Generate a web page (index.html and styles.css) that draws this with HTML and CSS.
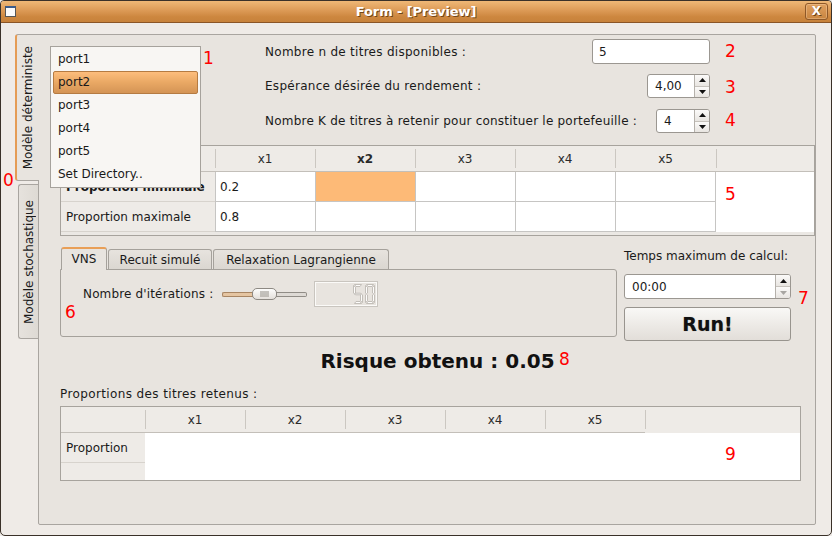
FILE: index.html
```html
<!DOCTYPE html>
<html lang="fr">
<head>
<meta charset="utf-8">
<title>Form - [Preview]</title>
<link rel="stylesheet" href="styles.css">
</head>
<body>
<div class="window">
  <header class="titlebar">
    <div class="tb-left"><span class="win-icon"></span></div>
    <span class="title">Form - [Preview]</span>
    <div class="tb-right"><span class="close">X</span></div>
  </header>
  <div class="body">
    <nav class="side-tabs">
      <div class="vtab active"><span>Modèle déterministe</span></div>
      <div class="vtab"><span>Modèle stochastique</span></div>
    </nav>
    <main class="pane">
      <section class="params">
        <div class="prow r1">
          <span class="plabel">Nombre n de titres disponibles :</span>
          <div class="field w-n">5</div>
        </div>
        <div class="prow r2">
          <span class="plabel">Espérance désirée du rendement :</span>
          <div class="spin w-esp">
            <span class="spin-val">4,00</span>
            <span class="spin-btns">
              <span><svg width="7" height="4" viewBox="0 0 7 4"><path d="M0 4L3.5 0L7 4Z" fill="#111"/></svg></span>
              <span><svg width="7" height="4" viewBox="0 0 7 4"><path d="M0 0L3.5 4L7 0Z" fill="#111"/></svg></span>
            </span>
          </div>
        </div>
        <div class="prow r3">
          <span class="plabel">Nombre K de titres à retenir pour constituer le portefeuille :</span>
          <div class="spin w-k">
            <span class="spin-val">4</span>
            <span class="spin-btns">
              <span><svg width="7" height="4" viewBox="0 0 7 4"><path d="M0 4L3.5 0L7 4Z" fill="#111"/></svg></span>
              <span><svg width="7" height="4" viewBox="0 0 7 4"><path d="M0 0L3.5 4L7 0Z" fill="#111"/></svg></span>
            </span>
          </div>
        </div>
      </section>

      <section class="grid1">
        <div class="hc corner"></div>
        <div class="hc sep">x1</div>
        <div class="hc sep bold">x2</div>
        <div class="hc sep">x3</div>
        <div class="hc sep">x4</div>
        <div class="hc sep">x5</div>
        <div class="hc sep fill"></div>

        <div class="rh bold">Proportion minimale</div>
        <div class="dc">0.2</div>
        <div class="dc sel"></div>
        <div class="dc"></div>
        <div class="dc"></div>
        <div class="dc last"></div>
        <div class="wfill"></div>

        <div class="rh">Proportion maximale</div>
        <div class="dc">0.8</div>
        <div class="dc"></div>
        <div class="dc"></div>
        <div class="dc"></div>
        <div class="dc last"></div>
        <div class="wfill"></div>

        <div class="bstrip"></div>
      </section>

      <section class="mid">
        <div class="algo">
          <div class="tabbar">
            <div class="tab active t-vns">VNS</div>
            <div class="tab t-recuit">Recuit simulé</div>
            <div class="tab t-relax">Relaxation Lagrangienne</div>
          </div>
          <div class="algo-pane">
            <div class="iter-row">
              <span class="iter-label">Nombre d'itérations :</span>
              <div class="slider">
                <span class="groove-fill"></span>
                <span class="handle"><span class="grip"></span></span>
                <span class="groove-rest"></span>
              </div>
              <div class="lcd">
                <svg width="23" height="20" viewBox="0 0 23 20">
                  <g fill="#fdfcfb" stroke="#bdb9b3" stroke-width="0.9" stroke-linejoin="round">
                    <g>
                      <polygon points="1.5,0.5 8.5,0.5 7,2.5 3,2.5"/>
                      <polygon points="0.5,1.5 2.5,3.2 2.5,9 1.5,9.8 0.5,9.2"/>
                      <polygon points="1.5,10 2.8,9.2 7.2,9.2 8.5,10 7.2,10.8 2.8,10.8"/>
                      <polygon points="9.5,10.8 9.5,18.5 7.5,16.8 7.5,11 8.5,10.2"/>
                      <polygon points="3,17.5 7,17.5 8.5,19.5 1.5,19.5"/>
                    </g>
                    <g transform="translate(12 0)">
                      <polygon points="1.5,0.5 8.5,0.5 7,2.5 3,2.5"/>
                      <polygon points="9.5,1.5 9.5,9.2 8.5,9.8 7.5,9 7.5,3.2"/>
                      <polygon points="0.5,1.5 2.5,3.2 2.5,9 1.5,9.8 0.5,9.2"/>
                      <polygon points="0.5,10.8 1.5,10.2 2.5,11 2.5,16.8 0.5,18.5"/>
                      <polygon points="9.5,10.8 9.5,18.5 7.5,16.8 7.5,11 8.5,10.2"/>
                      <polygon points="3,17.5 7,17.5 8.5,19.5 1.5,19.5"/>
                    </g>
                  </g>
                </svg>
              </div>
            </div>
          </div>
        </div>
        <div class="side-col">
          <span class="time-label">Temps maximum de calcul:</span>
          <div class="timeedit">
            <span class="spin-val">00:00</span>
            <span class="spin-btns">
              <span><svg width="7" height="4" viewBox="0 0 7 4"><path d="M0 4L3.5 0L7 4Z" fill="#111"/></svg></span>
              <span><svg width="7" height="4" viewBox="0 0 7 4"><path d="M0 0L3.5 4L7 0Z" fill="#a8a6a2"/></svg></span>
            </span>
          </div>
          <button class="run">Run!</button>
        </div>
      </section>

      <div class="risk">Risque obtenu : 0.05</div>

      <div class="caption">Proportions des titres retenus :</div>
      <section class="grid2">
        <div class="hc corner"></div>
        <div class="hc sep">x1</div>
        <div class="hc sep">x2</div>
        <div class="hc sep">x3</div>
        <div class="hc sep">x4</div>
        <div class="hc sep">x5</div>
        <div class="hc sep fill nb"></div>
        <div class="rh">Proportion</div>
        <div class="white span-data"></div>
        <div class="rh empty"></div>
      </section>
    </main>
  </div>

  <div class="menu">
    <div class="item">port1</div>
    <div class="item sel">port2</div>
    <div class="item">port3</div>
    <div class="item">port4</div>
    <div class="item">port5</div>
    <div class="item">Set Directory..</div>
  </div>

  <span class="ann a0">0</span>
  <span class="ann a1">1</span>
  <span class="ann a2">2</span>
  <span class="ann a3">3</span>
  <span class="ann a4">4</span>
  <span class="ann a5">5</span>
  <span class="ann a6">6</span>
  <span class="ann a7">7</span>
  <span class="ann a8">8</span>
  <span class="ann a9">9</span>
</div>
</body>
</html>
```

FILE: styles.css
```css
* { box-sizing: border-box; }
html, body { margin: 0; padding: 0; }
body {
  width: 832px;
  height: 536px;
  overflow: hidden;
  font-family: "DejaVu Sans", sans-serif;
  font-size: 12px;
  color: #1a1a1a;
  background: #efebe7;
}

.window {
  position: relative;
  width: 832px;
  height: 536px;
  border: 1px solid #3a3129;
  border-radius: 4px 4px 5px 5px;
  background: #efebe7;
  display: flex;
  flex-direction: column;
  overflow: hidden;
}

/* ---------- title bar ---------- */
.titlebar {
  height: 22px;
  flex: none;
  display: grid;
  grid-template-columns: 1fr auto 1fr;
  align-items: center;
  background: linear-gradient(#efb877 0%, #dc9a56 45%, #cd873f 75%, #c7823b 100%);
  border-bottom: 1px solid #8a5526;
}
.tb-left { display: flex; padding-left: 4px; }
.win-icon {
  width: 11px;
  height: 11px;
  background: #fbfbfb;
  border: 1px solid #555;
  border-top: 2px solid #3b5c8c;
}
.title {
  color: #fff;
  font-weight: bold;
  font-size: 13px;
  text-shadow: 1px 1px 0 #744516;
  letter-spacing: -0.1px;
}
.tb-right { display: flex; justify-content: flex-end; padding-right: 3px; }
.close {
  width: 23px;
  height: 17px;
  border: 1px solid #8e5828;
  border-radius: 3px;
  background: linear-gradient(#dfa060, #c98540);
  box-shadow: inset 0 0 0 1px rgba(255,220,180,0.35);
  color: #fff;
  font-weight: bold;
  font-size: 12px;
  line-height: 15px;
  text-align: center;
  text-shadow: 1px 1px 0 #6d4015;
}

/* ---------- body ---------- */
.body {
  flex: 1;
  display: flex;
  padding: 11px 14px 10px 14px;
}

.side-tabs {
  width: 23px;
  flex: none;
  display: flex;
  flex-direction: column;
  align-items: flex-end;
  position: relative;
  z-index: 2;
}
.vtab {
  display: flex;
  align-items: center;
  justify-content: center;
  color: #1a1a1a;
}
.vtab span {
  writing-mode: vertical-rl;
  transform: rotate(180deg);
  white-space: nowrap;
}
.vtab.active {
  width: 24px;
  height: 147px;
  margin-right: -1px;
  background: #e8e4df;
  border: 1px solid #a9a5a0;
  border-left: 2px solid #e59c55;
  border-right: none;
  border-radius: 3px 0 0 3px;
}
.vtab:not(.active) {
  width: 20px;
  height: 155px;
  margin-top: 3px;
  background: linear-gradient(90deg, #e6e2dd, #dedad4);
  border: 1px solid #a9a5a0;
  border-right: none;
  border-radius: 3px 0 0 3px;
}

.pane {
  width: 778px;
  height: 491px;
  flex: none;
  border: 1px solid #a9a5a0;
  border-radius: 0 2px 2px 2px;
  background: #e8e4df;
  padding: 4px 0 0 21px;
  display: flex;
  flex-direction: column;
}

/* ---------- parameters ---------- */
.params {
  margin-left: 205px;
  margin-right: 105px;
  display: flex;
  flex-direction: column;
}
.prow {
  display: flex;
  align-items: center;
  justify-content: space-between;
  height: 24px;
}
.prow.r1 { height: 25px; }
.prow.r2 { margin-top: 10px; }
.prow.r3 { margin-top: 11px; }
.plabel { letter-spacing: 0.28px; }
.r3 .plabel { letter-spacing: 0.22px; }

.field, .spin, .timeedit {
  height: 100%;
  background: #fff;
  border: 1px solid #9b9791;
  border-radius: 3px;
  display: flex;
  align-items: center;
}
.field { width: 118px; padding-left: 6px; }
.spin { width: 63px; }
.w-k { width: 54px; }
.spin-val { flex: 1; padding-left: 7px; }
.spin-btns {
  width: 15px;
  height: 100%;
  display: flex;
  flex-direction: column;
  border-left: 1px solid #b5b1ab;
}
.spin-btns span {
  flex: 1;
  display: flex;
  align-items: center;
  justify-content: center;
  background: linear-gradient(#fbfaf9, #e8e5e1);
}
.spin-btns span:first-child { border-radius: 0 2px 0 0; }
.spin-btns span:last-child { border-top: 1px solid #c6c2bc; border-radius: 0 0 2px 0; }

/* ---------- table 1 ---------- */
.grid1, .grid2 {
  display: grid;
  border: 1px solid #a7a39d;
  background: #e9e6e2;
}
.grid1 {
  margin-top: 12px;
  width: 755px;
  height: 91px;
  grid-template-columns: 154px 100px 100px 100px 100px 101px 1fr;
  grid-template-rows: 26px 30px 30px 3px;
}
.hc {
  background: #eeebe7;
  border-bottom: 1px solid #c3bfb9;
  display: flex;
  align-items: center;
  justify-content: center;
  color: #2a2a2a;
}
.hc.sep {
  background: linear-gradient(#cbc7c1, #cbc7c1) left 3px / 1px 19px no-repeat, #eeebe7;
}
.hc.nb { border-bottom: none; }
.bold { font-weight: bold; }
.rh {
  background: #eeebe7;
  border-bottom: 1px solid #d7d3cd;
  display: flex;
  align-items: center;
  padding-left: 5px;
  white-space: nowrap;
  overflow: hidden;
}
.dc {
  background: #fff;
  border-left: 1px solid #c6c5c3;
  border-bottom: 1px solid #c6c5c3;
  display: flex;
  align-items: center;
  padding-left: 4px;
}
.dc.last { border-right: 1px solid #c6c5c3; }
.dc.sel { background: #fdba77; }
.wfill { background: #fff; }
.bstrip { grid-column: 1 / -1; background: #ebe8e4; }

/* ---------- middle ---------- */
.mid {
  margin-top: 10px;
  display: flex;
  gap: 7px;
  align-items: flex-start;
}
.algo { width: 557px; display: flex; flex-direction: column; }
.tabbar {
  height: 23px;
  display: flex;
  align-items: flex-end;
  padding-left: 1px;
  gap: 1px;
}
.tab {
  height: 21px;
  border: 1px solid #a5a19b;
  border-bottom: none;
  border-radius: 3px 3px 0 0;
  background: linear-gradient(#e7e3de, #dad6d0);
  display: flex;
  align-items: center;
  justify-content: center;
  margin-bottom: -1px;
}
.tab.active {
  height: 23px;
  border-top: 2px solid #e99f57;
  background: #e8e4df;
  position: relative;
  z-index: 1;
  padding-bottom: 1px;
}
.t-vns { width: 46px; }
.t-recuit { width: 104px; }
.t-relax { width: 176px; }
.algo-pane {
  height: 68px;
  border: 1px solid #a5a19b;
  border-radius: 0 3px 3px 3px;
  background: #e8e4df;
  padding: 11px 0 0 22px;
}
.iter-row { display: flex; align-items: center; height: 26px; }
.iter-label { letter-spacing: 0.15px; }
.slider {
  margin-left: 9px;
  width: 85px;
  height: 12px;
  display: flex;
  align-items: center;
}
.groove-fill {
  width: 31px;
  height: 5px;
  background: #e5c5a2;
  border: 1px solid #a88563;
  border-right: none;
  border-radius: 2px 0 0 2px;
}
.handle {
  width: 25px;
  height: 12px;
  margin: 0 -1px;
  border: 1px solid #8d8983;
  border-radius: 5px;
  background: linear-gradient(#fdfdfc, #e4e0db);
  display: flex;
  align-items: center;
  justify-content: center;
  position: relative;
  z-index: 1;
}
.grip {
  width: 9px;
  height: 6px;
  background-image: radial-gradient(circle, #a9a59f 0.6px, transparent 0.9px);
  background-size: 2px 2px;
}
.groove-rest {
  flex: 1;
  height: 5px;
  background: #dedad5;
  border: 1px solid #908c86;
  border-left: none;
  border-radius: 0 2px 2px 0;
}
.lcd {
  margin-left: 7px;
  width: 64px;
  height: 26px;
  border: 1px solid #c9c5bf;
  box-shadow: inset 0 0 0 1px #fbfaf8;
  display: flex;
  align-items: center;
  justify-content: flex-end;
  padding-right: 1px;
}

.side-col {
  width: 167px;
  display: flex;
  flex-direction: column;
}
.time-label { margin-top: 3px; line-height: 15px; }
.timeedit { margin-top: 10px; height: 25px; }
.timeedit .spin-val { padding-left: 7px; }
.run {
  margin-top: 8px;
  height: 34px;
  width: 167px;
  border: 1px solid #98948e;
  border-radius: 3px;
  background: linear-gradient(#f9f8f6, #ebe8e4 60%, #e2ded9);
  font-family: "DejaVu Sans", sans-serif;
  font-weight: bold;
  font-size: 19px;
  color: #111;
  text-shadow: 0 0 1px rgba(0,0,0,0.35);
  padding: 0;
}

.risk {
  margin-top: 8px;
  line-height: 24px;
  text-align: center;
  font-weight: bold;
  font-size: 20px;
  color: #111;
}
.caption { margin-top: 14px; line-height: 15px; letter-spacing: 0.38px; }

/* ---------- table 2 ---------- */
.grid2 {
  margin-top: 4px;
  width: 741px;
  height: 75px;
  grid-template-columns: 84px 100px 100px 100px 100px 100px 1fr;
  grid-template-rows: 26px 30px 17px;
}
.grid2 .white.span-data {
  grid-column: 2 / -1;
  grid-row: 2 / 4;
  background: #fff;
}
.grid2 .rh.empty { border-bottom: none; border-top: 0; }

/* ---------- popup menu ---------- */
.menu {
  position: absolute;
  left: 49px;
  top: 45px;
  width: 151px;
  height: 142px;
  background: #f8f6f3;
  border: 1px solid #a6a29c;
  padding: 1px 2px;
  z-index: 5;
}
.item {
  height: 23px;
  line-height: 23px;
  padding-left: 5px;
  color: #1a1a1a;
}
.item.sel {
  background: linear-gradient(#fdbd7c, #e9a864 50%, #d49455);
  border: 1px solid #b57b42;
  border-radius: 2px;
  line-height: 21px;
  padding-left: 4px;
}

/* ---------- red annotations ---------- */
.ann {
  position: absolute;
  z-index: 6;
  color: #ff0000;
  font-size: 17px;
  line-height: 17px;
  font-family: "DejaVu Sans", sans-serif;
}
.a0 { left: 2px; top: 171px; }
.a1 { left: 202px; top: 49px; }
.a2 { left: 724px; top: 42px; }
.a3 { left: 724px; top: 78px; }
.a4 { left: 724px; top: 111px; }
.a5 { left: 724px; top: 185px; }
.a6 { left: 64px; top: 303px; }
.a7 { left: 797px; top: 289px; }
.a8 { left: 558px; top: 350px; }
.a9 { left: 724px; top: 445px; }
```
